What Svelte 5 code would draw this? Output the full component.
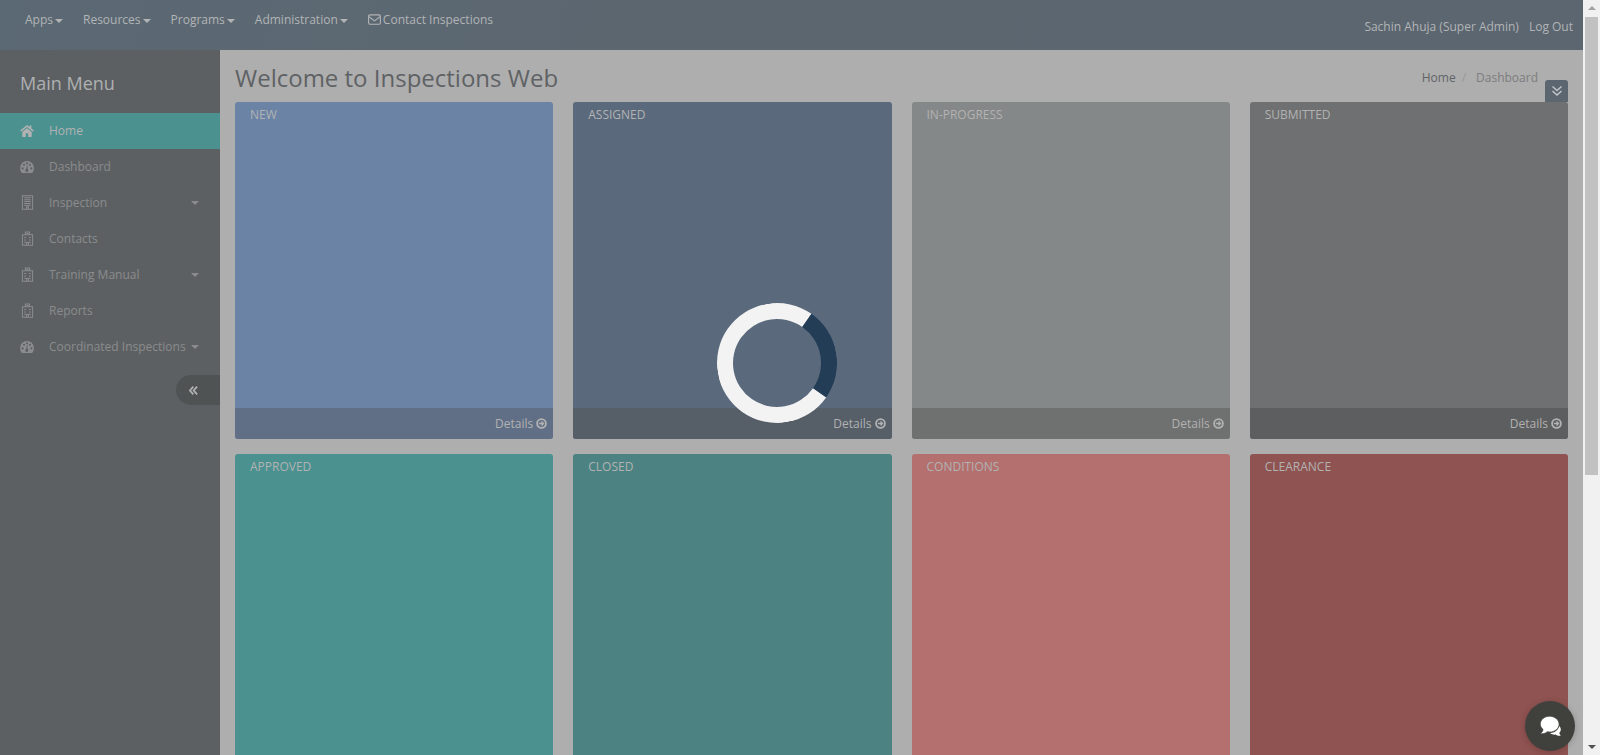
<script>
  const topLinks = ['Apps', 'Resources', 'Programs', 'Administration'];

  const menu = [
    { label: 'Home', icon: 'home', active: true },
    { label: 'Dashboard', icon: 'gauge' },
    { label: 'Inspection', icon: 'building', caret: true },
    { label: 'Contacts', icon: 'hospital' },
    { label: 'Training Manual', icon: 'hospital', caret: true },
    { label: 'Reports', icon: 'hospital' },
    { label: 'Coordinated Inspections', icon: 'gauge', caret: true }
  ];

  const cards = [
    { title: 'NEW', tone: 'new', details: true },
    { title: 'ASSIGNED', tone: 'assigned', details: true },
    { title: 'IN-PROGRESS', tone: 'progress', details: true },
    { title: 'SUBMITTED', tone: 'submitted', details: true },
    { title: 'APPROVED', tone: 'approved' },
    { title: 'CLOSED', tone: 'closed' },
    { title: 'CONDITIONS', tone: 'conditions' },
    { title: 'CLEARANCE', tone: 'clearance' }
  ];
</script>

{#snippet menuIcon(name)}
  {#if name === 'home'}
    <svg class="icon" viewBox="0 0 16 14" width="15" height="14"><path d="M8 0 .2 6.500l1.100 1.300L8 2.300l6.700 5.500 1.100-1.300-2.800-2.300V.8h-2.200v1.600zM2.600 8.200v4.900c0 .4.300.7.700.7h3.300V9.700h2.800v4.100h3.300c.4 0 .7-.3.700-.7V8.200L8 3.800z" fill="currentColor"/></svg>
  {:else if name === 'gauge'}
    <svg class="icon" viewBox="0 0 16 14" width="15" height="14"><path fill-rule="evenodd" d="M8 .2A7.900 7.900 0 0 0 .1 8.100c0 1.900.5 3.700 1.500 5.200.2.300.4.500.7.500h11.400c.3 0 .5-.2.700-.5 1-1.500 1.500-3.300 1.500-5.200A7.900 7.900 0 0 0 8 .2zM3 9.800a1.200 1.200 0 1 1 0-2.400 1.200 1.200 0 0 1 0 2.400zm1.600-4.100a1.200 1.200 0 1 1 0-2.400 1.200 1.200 0 0 1 0 2.400zM8 4a1.200 1.200 0 1 1 0-2.400A1.200 1.200 0 0 1 8 4zm1.400 6.600a1.700 1.700 0 1 1-2.500-1.100l1.200-4.300c.1-.4.900-.2.800.2L8.300 8.800a1.700 1.700 0 0 1 1.100 1.800zM13 9.800a1.200 1.200 0 1 1 0-2.400 1.200 1.200 0 0 1 0 2.400zm-1.600-4.100a1.200 1.200 0 1 1 0-2.400 1.200 1.200 0 0 1 0 2.400z" fill="currentColor"/></svg>
  {:else if name === 'building'}
    <svg class="icon" viewBox="0 0 14 16" width="13" height="15"><path d="M1.500.8h11v14.400h-11zM3.500 3h7M3.500 5h7M3.500 7h7M3.500 9h7M3.500 11h7M6 15v-2.500h2V15" fill="none" stroke="currentColor" stroke-width="1.100"/></svg>
  {:else}
    <svg class="icon" viewBox="0 0 14 16" width="13" height="15"><path d="M1.500 4h11v11.200h-11zM4.700 4V1h4.600v3M5.800 2.500h2.400M3.500 7h2M8.500 7h2M3.500 9.500h2M8.500 9.500h2M3.500 12h2M8.500 12h2M6 15.200v-3h2v3" fill="none" stroke="currentColor" stroke-width="1.100"/></svg>
  {/if}
{/snippet}

<div class="page">
  <div class="viewport">
    <header class="topbar">
      <nav class="top-links">
        {#each topLinks as link}
          <a href="#top">{link}<span class="caret"></span></a>
        {/each}
        <a href="#top" class="contact">
          <svg viewBox="0 0 14 12" width="13" height="11"><rect x=".6" y=".9" width="12.800" height="10.200" rx="1.200" fill="none" stroke="currentColor" stroke-width="1.200"/><path d="m1 3 6 4.500L13 3" fill="none" stroke="currentColor" stroke-width="1.200"/></svg>
          Contact Inspections
        </a>
      </nav>
      <div class="user">
        <span>Sachin Ahuja (Super Admin)</span>
        <a href="#top">Log Out</a>
      </div>
    </header>

    <div class="body">
      <aside class="sidebar">
        <h2>Main Menu</h2>
        <ul>
          {#each menu as item}
            <li class:active={item.active}>
              <span class="icon-box">{@render menuIcon(item.icon)}</span>
              <span class="label">{item.label}</span>
              {#if item.caret}<span class="caret side"></span>{/if}
            </li>
          {/each}
        </ul>
        <button class="collapse" aria-label="Collapse menu">
          <svg viewBox="0 0 10 10" width="9" height="9"><path d="M4.800 .8 1 5l3.800 4.200M9 .8 5.200 5 9 9.200" fill="none" stroke="currentColor" stroke-width="2"/></svg>
        </button>
      </aside>

      <main class="content">
        <div class="heading">
          <h1>Welcome to Inspections Web</h1>
          <div class="crumbs"><span class="home">Home</span><span class="slash">/</span><span>Dashboard</span></div>
        </div>
        <button class="toggle" aria-label="Toggle">
          <svg viewBox="0 0 12 12" width="12" height="12"><path d="m1.500 1.500 4.500 4 4.500-4M1.500 6l4.500 4 4.500-4" fill="none" stroke="currentColor" stroke-width="1.500"/></svg>
        </button>
        <div class="grid">
          {#each cards as card}
            <section class="card {card.tone}">
              <div class="card-title">{card.title}</div>
              {#if card.details}
                <div class="card-foot">
                  Details
                  <svg viewBox="0 0 12 12" width="11" height="11"><circle cx="6" cy="6" r="4.800" fill="none" stroke="currentColor" stroke-width="2"/><path d="M3.200 6h4.800M6 3.800 8.200 6 6 8.200" fill="none" stroke="currentColor" stroke-width="1.400"/></svg>
                </div>
              {/if}
            </section>
          {/each}
        </div>
      </main>
    </div>

    <div class="spinner"></div>
  </div>

  <div class="scrollbar">
    <span class="arrow up"></span>
    <span class="thumb"></span>
    <span class="arrow down"></span>
  </div>

  <button class="chat" aria-label="Chat">
    <svg viewBox="0 0 21 20" width="21" height="20">
      <path d="M20.500 19.800c-2 .2-3.800-.3-5-1.200-2 .2-4-.4-5.500-1.600 4.500 0 8.500-2.800 9.100-7 1.100.9 1.700 2.100 1.700 3.400 0 1.300-.6 2.500-1.500 3.300.1.900.4 1.500.9 2 .3.300.5.900.3 1.100z" fill="#fff"/>
      <path d="M9.700.2C4.500.2.300 3.700.3 8c0 2.200 1 4.100 2.800 5.500-.2 1.500-1 2.600-2.100 3.500-.4.300-.2.800.3.800 2.300.1 4.400-.7 6-2.100.8.200 1.600.3 2.400.3 5.200 0 9.400-3.500 9.400-7.800S14.900.2 9.700.2z" fill="#fff" stroke="#40413d" stroke-width=".7"/>
    </svg>
  </button>
</div>

<style>
  :global(body) {
    margin: 0;
    overflow: hidden;
  }

  .page {
    position: relative;
    display: flex;
    height: 755px;
    overflow: hidden;
    font-family: "Open Sans", "Liberation Sans", sans-serif;
    font-size: 12px;
  }

  .viewport {
    position: relative;
    flex: 1;
    min-width: 0;
    background: #aeaeae;
  }

  a {
    color: inherit;
    text-decoration: none;
  }

  button {
    border: none;
    padding: 0;
    cursor: pointer;
  }

  .topbar {
    display: flex;
    justify-content: space-between;
    height: 50px;
    background: linear-gradient(100deg, #5b6974 0%, #5c666f 45%, #5b6670 100%);
    color: #b2b4b6;
  }

  .top-links {
    display: flex;
    gap: 20px;
    padding: 11px 0 0 25px;
    line-height: 18px;
  }

  .caret {
    display: inline-block;
    margin-left: 2px;
    vertical-align: middle;
    border-top: 4px solid currentColor;
    border-left: 4px solid transparent;
    border-right: 4px solid transparent;
  }

  .contact svg {
    margin-right: -1px;
    vertical-align: -1px;
  }

  .user {
    display: flex;
    gap: 10px;
    padding: 18px 10px 0 0;
    line-height: 18px;
  }

  .body {
    display: flex;
  }

  .sidebar {
    position: relative;
    flex: 0 0 220px;
    height: 705px;
    background: #5d6062;
    color: #8a8c8e;
  }

  .sidebar h2 {
    margin: 0;
    padding: 22px 0 18px 20px;
    height: 23px;
    font-size: 18px;
    font-weight: 400;
    line-height: 23px;
    color: #aeb0b2;
  }

  .sidebar ul {
    margin: 0;
    padding: 0;
    list-style: none;
  }

  .sidebar li {
    display: flex;
    align-items: center;
    box-sizing: border-box;
    height: 36px;
    padding: 0 0 1px 20px;
  }

  .sidebar li.active {
    background: #4a9190;
    color: #b2b2b2;
  }

  .icon-box {
    display: flex;
    justify-content: center;
    width: 14px;
    margin-right: 15px;
  }

  .icon {
    display: block;
  }

  .caret.side {
    position: absolute;
    left: 191px;
    margin: 0;
  }

  .collapse {
    position: absolute;
    top: 325px;
    right: 0;
    width: 44px;
    height: 30px;
    padding-right: 10px;
    border-radius: 15px 0 0 15px;
    background: #505354;
    color: #b2b2b2;
  }

  .content {
    position: relative;
    flex: 1;
    min-width: 0;
    padding: 0 15px;
  }

  .heading {
    display: flex;
    justify-content: space-between;
    height: 52px;
  }

  h1 {
    margin: 12px 0 0;
    font-size: 24px;
    font-weight: 400;
    line-height: 32px;
    color: #5f6265;
  }

  .crumbs {
    display: flex;
    padding: 19px 30px 0 0;
    line-height: 18px;
    color: #7d7d7f;
  }

  .crumbs .home {
    color: #626466;
  }

  .slash {
    margin: 0 10px 0 6px;
    color: #979797;
  }

  .toggle {
    position: absolute;
    top: 30px;
    right: 15px;
    width: 23px;
    height: 22px;
    border-radius: 3px 3px 0 0;
    background: #5b6670;
    color: #c2c6ca;
    display: flex;
    align-items: center;
    justify-content: center;
  }

  .grid {
    display: grid;
    grid-template-columns: repeat(4, 1fr);
    gap: 15px 20px;
  }

  .card {
    display: flex;
    flex-direction: column;
    justify-content: space-between;
    height: 337px;
    border-radius: 3px;
    overflow: hidden;
    color: #b2b2b2;
  }

  .card-title {
    padding: 4px 15px 0;
    line-height: 18px;
  }

  .card-foot {
    display: flex;
    justify-content: flex-end;
    align-items: center;
    gap: 3px;
    height: 31px;
    padding-right: 6px;
  }

  .new { background: #6b84a6; }
  .new .card-foot { background: #606f86; }
  .assigned { background: #5a6a7c; }
  .assigned .card-foot { background: #565e68; }
  .progress { background: #858888; }
  .progress .card-foot { background: #6f7070; }
  .submitted { background: #6f7071; }
  .submitted .card-foot { background: #5d5e5f; }
  .approved { background: #4a9190; }
  .closed { background: #4c8382; }
  .conditions { background: #b3706f; }
  .clearance { background: #8f5351; }

  .spinner {
    position: absolute;
    left: 717px;
    top: 303px;
    box-sizing: border-box;
    width: 120px;
    height: 120px;
    border: 16px solid #f3f3f3;
    border-right-color: #243d57;
    border-radius: 50%;
    transform: rotate(-10deg);
  }

  .scrollbar {
    flex: 0 0 17px;
    display: flex;
    flex-direction: column;
    align-items: center;
    background: #f1f1f1;
  }

  .arrow {
    flex: 0 0 17px;
    width: 0;
    box-sizing: border-box;
    border-left: 4px solid transparent;
    border-right: 4px solid transparent;
  }

  .arrow.up {
    height: 0;
    flex: 0 0 auto;
    margin: 6px 0 6px;
    border-bottom: 4px solid #a3a3a3;
  }

  .arrow.down {
    height: 0;
    flex: 0 0 auto;
    margin: auto 0 6px;
    border-top: 4px solid #505050;
  }

  .thumb {
    width: 13px;
    height: 458px;
    margin-top: 1px;
    background: #c1c1c1;
  }

  .chat {
    position: absolute;
    left: 1525px;
    top: 701px;
    width: 50px;
    height: 50px;
    border-radius: 50%;
    background: #40413d;
    box-shadow: 0 1px 6px rgba(0, 0, 0, 0.2);
    display: flex;
    align-items: center;
    justify-content: center;
  }
</style>
